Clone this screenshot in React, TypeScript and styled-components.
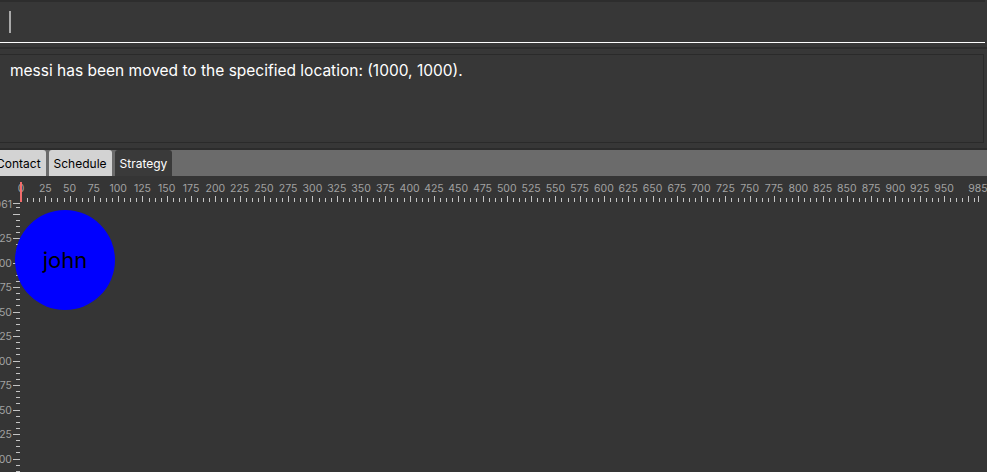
import React from "react";
import styled, { createGlobalStyle } from "styled-components";

const Global = createGlobalStyle`
  html, body { margin: 0; padding: 0; background: #373737; overflow: hidden; }
  body { font-family: Inter, "Noto Sans", sans-serif; }
  #root { width: 987px; height: 472px; }
  * { box-sizing: border-box; }
`;

const Page = styled.div`
  width: 987px;
  height: 472px;
  display: flex;
  flex-direction: column;
  background: #373737;
  overflow: hidden;
`;

const CommandBar = styled.div`
  height: 43px;
  flex: none;
  border-top: 2px solid #2d2d2d;
  display: flex;
  align-items: center;
  padding-left: 9px;
  width: 985px;
  border-bottom: 1px solid #ffffff;
`;

const Caret = styled.div`
  width: 2px;
  height: 22px;
  background: #a9a9a9;
`;

const ResultPane = styled.div`
  flex: none;
  margin-top: 4px;
  border-top: 2px solid #2c2c2c;
  border-bottom: 2px solid #2c2c2c;
  padding: 5px 3px 5px 0;
  display: flex;
`;

const ResultBox = styled.div`
  flex: 1;
  height: 89px;
  border: 1px solid #2a2a2a;
  border-left: none;
  padding: 6px 10px;
  color: #ffffff;
  font-size: 15.5px;
  line-height: 20px;
`;

const TabHeader = styled.div`
  flex: none;
  height: 26px;
  background: #6b6b6b;
  display: flex;
  align-items: stretch;
  gap: 3px;
`;

const Tab = styled.div<{ $active?: boolean; $shift?: number }>`
  display: flex;
  align-items: center;
  padding: 0 5px;
  font-size: 12px;
  border-radius: 3px 3px 0 0;
  background: ${(p) => (p.$active ? "#3a3a3a" : "#d3d3d3")};
  color: ${(p) => (p.$active ? "#ffffff" : "#000000")};
  margin-left: ${(p) => (p.$shift ? `${p.$shift}px` : "0")};
`;

const Canvas = styled.div`
  position: relative;
  flex: 1;
  background: #353535;
  overflow: hidden;
`;

const RulerLayer = styled.svg`
  position: absolute;
  inset: 0;
  font-family: Inter, "Noto Sans", sans-serif;
  font-size: 10.5px;
`;

const Node = styled.div`
  position: absolute;
  width: 100px;
  height: 100px;
  border-radius: 50%;
  background: #0000ff;
  color: #000000;
  font-size: 22px;
  display: flex;
  align-items: center;
  justify-content: center;
`;

const SX = 0.9716;
const X0 = 21;
const SY = 0.98;
const yOf = (v: number) => 62 + (1025 - v) * SY;

function Rulers() {
  const els: React.ReactNode[] = [];
  for (let u = 6.25; u <= 985; u += 6.25) {
    const x = Math.round(X0 + u * SX) + 0.5;
    const major = u % 25 === 0;
    els.push(
      <line key={"tx" + u} x1={x} x2={x} y1={major ? 20 : 22} y2={26} stroke="#c4c4c4" strokeWidth={1} />
    );
  }
  const endX = Math.round(X0 + 985 * SX) + 0.5;
  els.push(<line key="tend" x1={endX} x2={endX} y1={20} y2={26} stroke="#c4c4c4" />);
  for (let u = 0; u <= 950; u += 25) {
    els.push(
      <text key={"tl" + u} x={X0 + u * SX} y={15.5} textAnchor="middle" fill="#a2a2a2">
        {u}
      </text>
    );
  }
  els.push(
    <text key="tl985" x={X0 + 985 * SX} y={15.5} textAnchor="middle" fill="#a2a2a2">
      985
    </text>
  );
  const topV = 1061;
  els.push(<line key="ltop" x1={13} x2={20} y1={27.5} y2={27.5} stroke="#c4c4c4" />);
  els.push(
    <text key="lltop" x={12} y={31.5} textAnchor="end" fill="#a2a2a2">
      {topV}
    </text>
  );
  for (let v = 1056.25; v >= 780; v -= 6.25) {
    const y = Math.round(yOf(v)) + 0.5;
    const major = v % 25 === 0;
    els.push(
      <line key={"ly" + v} x1={major ? 13 : 16} x2={20} y1={y} y2={y} stroke="#c4c4c4" />
    );
    if (major && v <= 1025) {
      els.push(
        <text key={"ll" + v} x={12} y={yOf(v) + 4} textAnchor="end" fill="#a2a2a2">
          {v}
        </text>
      );
    }
  }
  return (
    <RulerLayer width={987} height={296} shapeRendering="crispEdges">
      {els}
      <rect x={20} y={6} width={2} height={20} fill="#f26c6c" />
    </RulerLayer>
  );
}

export default function App() {
  return (
    <Page>
      <Global />
      <CommandBar>
        <Caret />
      </CommandBar>
      <ResultPane>
        <ResultBox>messi has been moved to the specified location: (1000, 1000).</ResultBox>
      </ResultPane>
      <TabHeader>
        <Tab $shift={-9}>Contact</Tab>
        <Tab>Schedule</Tab>
        <Tab $active>Strategy</Tab>
      </TabHeader>
      <Canvas>
        <Rulers />
        <Node style={{ left: 15, top: 34 }}>john</Node>
      </Canvas>
    </Page>
  );
}
